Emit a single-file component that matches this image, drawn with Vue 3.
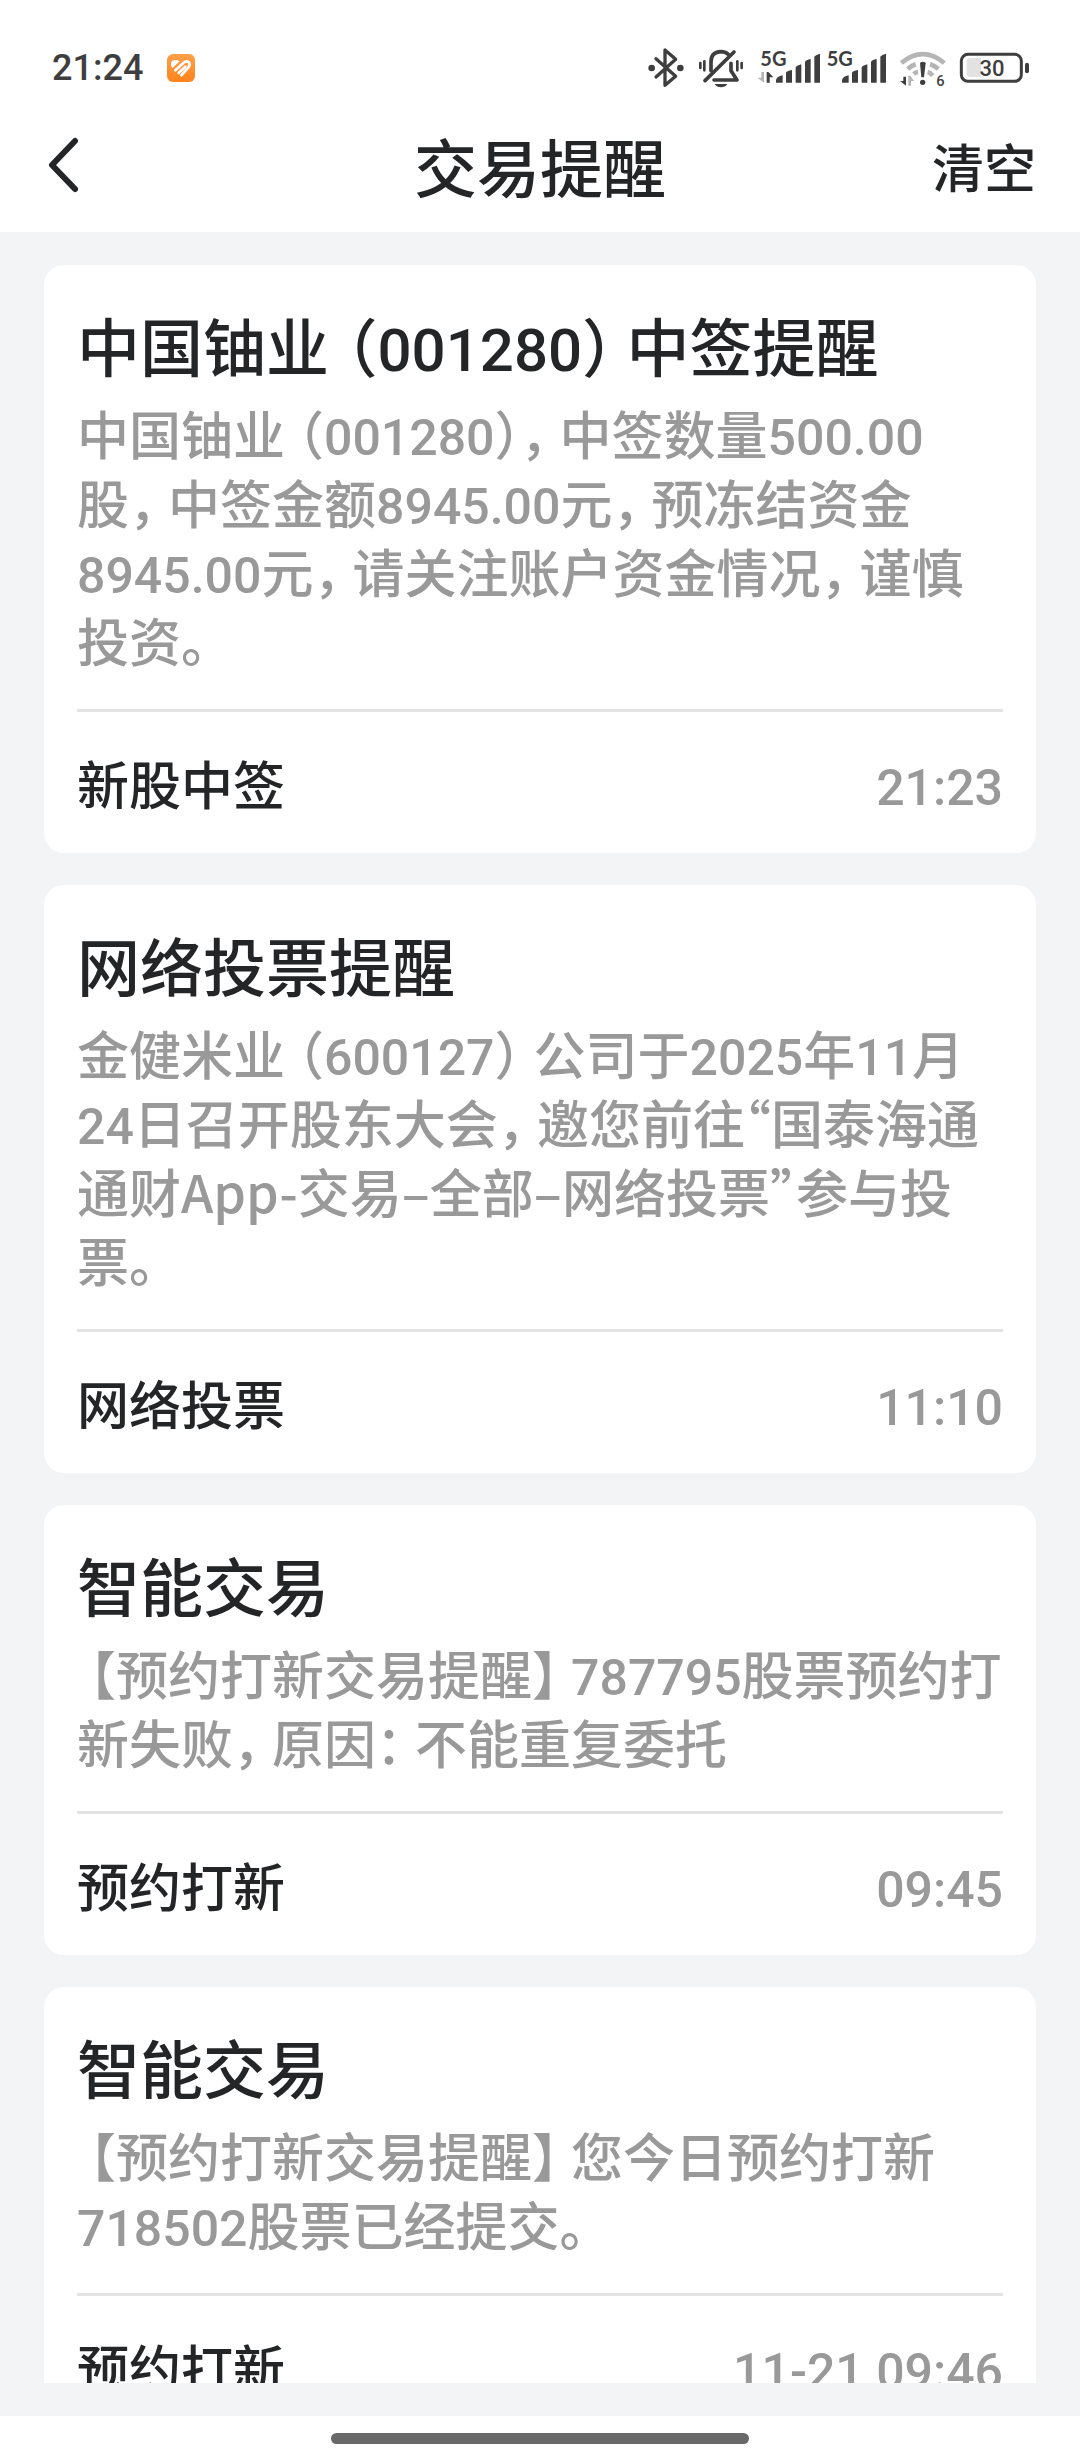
<script setup>
const notices = [
  {
    id: 1,
    title: '中国铀业（001280）中签提醒',
    body: '中国铀业（001280），中签数量500.00股，中签金额8945.00元，预冻结资金8945.00元，请关注账户资金情况，谨慎投资。',
    type: '新股中签',
    time: '21:23',
  },
  {
    id: 2,
    title: '网络投票提醒',
    body: '金健米业（600127）公司于2025年11月24日召开股东大会，邀您前往“国泰海通通财App-交易–全部–网络投票”参与投票。',
    type: '网络投票',
    time: '11:10',
  },
  {
    id: 3,
    title: '智能交易',
    body: '【预约打新交易提醒】787795股票预约打新失败，原因：不能重复委托',
    type: '预约打新',
    time: '09:45',
  },
  {
    id: 4,
    title: '智能交易',
    body: '【预约打新交易提醒】您今日预约打新718502股票已经提交。',
    type: '预约打新',
    time: '11-21 09:46',
  },
]

// punctuation gets narrower spacing, numbers their own face
function kind(text) {
  if (/^[（【]$/.test(text)) return 'open'
  if (/^[“”]$/.test(text)) return 'quote'
  if (/^[）】，：]+$/.test(text)) return 'close'
  if (/^[\d.]+$/.test(text)) return 'num'
  return ''
}

function split(text) {
  return text
    .split(/(），|[（）【】，：“”]|[\d.]+)/)
    .filter(Boolean)
    .map((part) => ({ text: part, kind: kind(part) }))
}
</script>

<template>
  <div class="page">
    <div class="status">
      <span class="clock">21:24</span>
      <svg class="app-badge" viewBox="0 0 84 84">
        <defs>
          <linearGradient id="badge" x1="0" y1="0" x2="0" y2="1">
            <stop offset="0" stop-color="#ffa04a" />
            <stop offset="1" stop-color="#ff831c" />
          </linearGradient>
        </defs>
        <rect width="84" height="84" rx="18" fill="url(#badge)" />
        <path d="M12 34Q10 20 23 18Q32 17 38 22L17 42Q12 38 12 34Z" fill="#fff" />
        <g fill="none" stroke="#fff" stroke-width="8" stroke-linecap="round" stroke-linejoin="round">
          <path d="M25 49L49 27Q58 19 65 24Q71 31 65 39L43 64" />
          <path d="M35 57L55 38" />
        </g>
      </svg>
      <div class="status-icons">
        <svg class="icon" width="36" height="40" viewBox="54 54 108 120">
          <path d="M78 86L137 139L105 166V60L137 88L78 141" fill="none" stroke="#3e3e3e" stroke-width="10" stroke-linecap="round" stroke-linejoin="round" />
          <circle cx="65" cy="114" r="10" fill="#3e3e3e" />
          <circle cx="151" cy="114" r="10" fill="#3e3e3e" />
        </svg>
        <svg class="icon" width="48" height="40" viewBox="198 54 144 120">
          <g fill="none" stroke="#3e3e3e" stroke-linecap="round" stroke-linejoin="round">
            <path d="M243 122V96Q243 66 272 65Q286 65 295 73" stroke-width="11" />
            <path d="M303 100V122L321 150H252" stroke-width="11" />
            <path d="M312 66L225 152" stroke-width="11" />
            <path d="M211 99V114M223 94V121M322 94V121M335 99V114" stroke-width="8" />
          </g>
          <path d="M254 162H292Q286 172 273 172Q260 172 254 162Z" fill="#3e3e3e" />
        </svg>
        <svg class="icon" width="131" height="40" viewBox="378 54 393 120">
          <g fill="#3e3e3e">
            <text class="net" x="391" y="108">5G</text>
            <text class="net" x="590" y="108">5G</text>
            <path d="M410 126H415L430 142H419V158H410Z" />
            <path v-for="x in [0, 198]" :key="x" :transform="`translate(${x} 0)`" d="M438 158V150Q440 140 458 136V158ZM468 158V128Q470 123 486 120V158ZM497 158V112Q499 107 514 103V158ZM525 158V96Q527 90 542 87V158ZM553 158V80Q556 75 570 71V158Z" />
          </g>
          <path d="M394 126H402V158L382 143H394Z" fill="#b5b5b5" />
        </svg>
        <svg class="icon" width="48" height="40" viewBox="174 54 144 120">
          <g fill="none" stroke="#b5b5b5" stroke-width="14">
            <path d="M181 99Q245 46 310 99" />
            <path d="M200 117Q211 107 224 103M267 103Q281 107 292 117" />
            <path d="M218 132Q224 127 231 126M260 126Q268 128 275 137" />
          </g>
          <path d="M202 137H208L219 153H210V167H202Z" fill="#b5b5b5" />
          <g fill="#3e3e3e">
            <path d="M237 100Q237 95 245 95Q254 95 254 100L249 142H241Z" />
            <circle cx="245" cy="157" r="8" />
            <path d="M187 140H195V167L177 153H187Z" />
            <text class="gen" x="286" y="168">6</text>
          </g>
        </svg>
        <svg class="icon" width="71" height="40" viewBox="357 54 213 120">
          <rect x="364" y="73" width="180" height="81" rx="20" fill="none" stroke="#3e3e3e" stroke-width="9" />
          <path d="M423 84H390Q380 84 380 94V132Q380 141 390 141H423Z" fill="#e2e2e2" />
          <rect x="555" y="98" width="12" height="32" rx="6" fill="#3e3e3e" />
          <text class="level" x="456" y="139" text-anchor="middle" fill="#3e3e3e">30</text>
        </svg>
      </div>
    </div>

    <header class="header">
      <button class="back" type="button" aria-label="返回">
        <svg width="34" height="60" viewBox="0 0 34 60">
          <path d="M31 6L8 30L31 54" fill="none" stroke="#232527" stroke-width="6" stroke-linecap="round" stroke-linejoin="round" />
        </svg>
      </button>
      <h1 class="heading">交易提醒</h1>
      <button class="clear" type="button">清空</button>
    </header>

    <main class="list">
      <article v-for="item in notices" :key="item.id" class="card">
        <h2 class="card-title"><span v-for="(part, i) in split(item.title)" :key="i" :class="part.kind">{{ part.text }}</span></h2>
        <p class="card-body"><span v-for="(part, i) in split(item.body)" :key="i" :class="part.kind">{{ part.text }}</span></p>
        <div class="card-foot">
          <span>{{ item.type }}</span>
          <time class="time">{{ item.time }}</time>
        </div>
      </article>
    </main>

    <div class="home">
      <div class="home-bar"></div>
    </div>
  </div>
</template>

<style>
body { background: #f3f4f6; }
</style>

<style scoped>
.page {
  display: flex;
  flex-direction: column;
  height: 100vh;
  background: #f3f4f6;
  color: #232527;
  font-family: "Noto Sans CJK SC", sans-serif;
  font-weight: 500;
}

.status {
  display: flex;
  align-items: center;
  height: 104px;
  padding: 32px 50px 0 52px;
  box-sizing: border-box;
  background: #fff;
  color: #3e3e3e;
}

.clock { font-family: Roboto, sans-serif; font-size: 36px; line-height: 40px; }
.app-badge { width: 28px; height: 28px; margin-left: 24px; }
.status-icons { display: flex; gap: 12px; margin-left: auto; }
.icon { display: block; overflow: visible; }
.net { font: 700 60px "Lato", sans-serif; }
.gen { font: 500 44px Roboto, sans-serif; }
.level { font: 500 66px Roboto, sans-serif; }

.header {
  display: grid;
  grid-template-columns: 1fr auto 1fr;
  align-items: center;
  height: 128px;
  flex: none;
  padding: 0 44px 6px;
  box-sizing: border-box;
  background: #fff;
}

.back, .clear {
  padding: 0;
  border: 0;
  background: none;
  color: inherit;
  font: inherit;
}

.back { justify-self: start; }
.back svg { display: block; }
.heading { margin: 0; font-size: 63px; line-height: 78px; font-weight: 500; }
.clear { justify-self: end; font-size: 52px; line-height: 69px; }

.list {
  flex: 1;
  min-height: 0;
  margin: 33px 0;
  padding: 0 44px;
  overflow: hidden;
}

.card {
  margin-bottom: 32px;
  padding: 40px 33px 0;
  border-radius: 20px;
  background: #fff;
}

.card-title { margin: 0 0 15px; font-size: 63px; line-height: 78px; font-weight: 500; }
.card-body { margin: 0; padding-bottom: 35px; font-size: 52px; line-height: 69px; color: #999; }

.card-foot {
  display: flex;
  align-items: baseline;
  justify-content: space-between;
  padding: 36px 0 34px;
  border-top: 3px solid #e3e3e3;
  font-size: 52px;
  line-height: 69px;
}

.time { color: #999; font-family: Roboto, sans-serif; font-size: 50px; line-height: 1; }

.open, .close, .quote { font-feature-settings: "halt"; }
.open { padding-left: 13px; }
.close { padding-right: 13px; }
.card-title .open { padding-left: 17px; }
.num { font-family: Roboto, sans-serif; }
.card-body .num { font-size: 50px; line-height: 1; }
.card-title .num { font-size: 60px; line-height: 1; }

.card-foot { min-height: 71px; }

.home {
  display: flex;
  justify-content: center;
  height: 44px;
  flex: none;
  padding-top: 17px;
  box-sizing: border-box;
  background: #fff;
}

.home-bar { width: 418px; height: 11px; border-radius: 6px; background: #696969; }
</style>
